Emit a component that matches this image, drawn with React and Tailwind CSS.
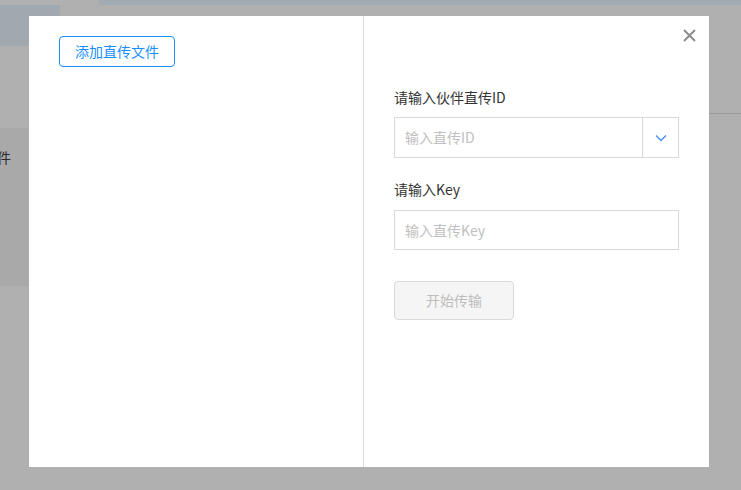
export default function App() {
  const font = { fontFamily: '"Noto Sans CJK SC", "Noto Sans", sans-serif' };

  return (
    <div className="relative h-[490px] w-full overflow-hidden bg-[#b0b0b0]" style={font}>
      {/* page underneath the overlay */}
      <div className="ml-[99px] h-[5px] bg-[#a2aab2]" />
      <div className="h-[41px] w-[60px] bg-[#a0a8b0]" />
      <div className="mt-[67px] ml-auto h-px w-[32px] bg-[#9a9a9a]" />
      <div className="mt-[14px] h-[158px] w-[29px] overflow-hidden bg-[#a9a9a9]">
        <p className="-ml-[3px] pt-[19px] text-[14px] leading-5 text-[#2a2a2a]">件</p>
      </div>

      {/* modal */}
      <div className="absolute left-[29px] top-[16px] flex h-[451px] w-[680px] bg-white">
        <div className="w-[335px] border-r border-[#dcdcdc] pl-[30px] pt-[20px]">
          <button
            type="button"
            className="h-[31px] w-[116px] rounded border border-[#1890ff] text-[14px] text-[#1890ff]"
          >
            添加直传文件
          </button>
        </div>

        <div className="flex-1 px-[30px] pt-[71px]">
          <p className="text-[14px] leading-5 text-[#333]">请输入伙伴直传ID</p>
          <div className="mt-[10px] flex h-[41px] border border-[#d9d9d9]">
            <div className="flex flex-1 items-center px-[10px] text-[14px] text-[#c0c0c0]">
              输入直传ID
            </div>
            <div className="flex w-[36px] items-center justify-center border-l border-[#d9d9d9]">
              <svg width="12" height="8" viewBox="0 0 12 8" fill="none">
                <path d="M1 1.5 L6 6.5 L11 1.5" stroke="#4a90f0" strokeWidth="1.4" />
              </svg>
            </div>
          </div>

          <p className="mt-[21px] text-[14px] leading-5 text-[#333]">请输入Key</p>
          <div className="mt-[11px] flex h-[40px] items-center border border-[#d9d9d9] px-[10px] text-[14px] text-[#c0c0c0]">
            输入直传Key
          </div>

          <button
            type="button"
            className="mt-[31px] h-[39px] w-[120px] rounded border border-[#d9d9d9] bg-[#f5f5f5] text-[14px] text-[#bdbdbd]"
          >
            开始传输
          </button>
        </div>

        <button type="button" className="absolute right-[13px] top-[13px] h-[13px] w-[13px]">
          <svg width="13" height="13" viewBox="0 0 13 13">
            <path d="M1 1 L12 12 M12 1 L1 12" stroke="#8c8c8c" strokeWidth="2" />
          </svg>
        </button>
      </div>
    </div>
  );
}
